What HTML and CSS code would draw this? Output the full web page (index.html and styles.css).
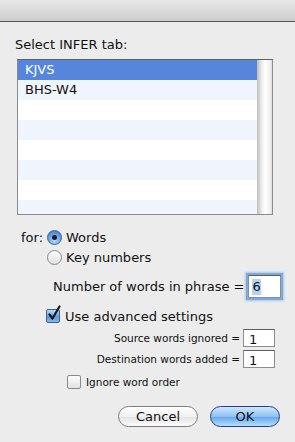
FILE: index.html
```html
<!DOCTYPE html>
<html lang="en">
<head>
  <meta charset="UTF-8" />
  <title>Select INFER tab</title>
  <link rel="stylesheet" href="styles.css">
</head>
<body>
  <div class="titlebar"></div>

  <div class="dialog">
    <div class="caption">Select INFER tab:</div>

    <div class="list">
      <div class="rows">
        <div class="row selected">KJVS</div>
        <div class="row">BHS-W4</div>
        <div class="row"></div>
        <div class="row"></div>
        <div class="row"></div>
        <div class="row"></div>
        <div class="row"></div>
        <div class="row"></div>
      </div>
      <div class="scrollbar"></div>
    </div>

    <div class="for-group">
      <span class="for-label">for:</span>
      <div class="radios">
        <label class="radio-item"><span class="radio checked"></span>Words</label>
        <label class="radio-item"><span class="radio"></span>Key numbers</label>
      </div>
    </div>

    <div class="phrase-row">
      <span>Number of words in phrase =</span>
      <span class="field focused"><span class="sel">6</span></span>
    </div>

    <label class="check-item">
      <span class="checkbox">
        <svg width="17" height="19" viewBox="0 0 17 19">
          <path d="M3.5 10.5 L6.5 14.5 L13.5 2.5" fill="none" stroke="#1a1a1a" stroke-width="2.2" stroke-linecap="round" stroke-linejoin="round"/>
        </svg>
      </span>
      Use advanced settings
    </label>

    <div class="small-row first">
      <span>Source words ignored =</span>
      <span class="field small">1</span>
    </div>
    <div class="small-row">
      <span>Destination words added =</span>
      <span class="field small">1</span>
    </div>

    <label class="small-check">
      <span class="box"></span>Ignore word order
    </label>

    <div class="buttons">
      <button class="btn cancel">Cancel</button>
      <button class="btn ok">OK</button>
    </div>
  </div>
</body>
</html>
```

FILE: styles.css
```css
* {
  margin: 0;
  padding: 0;
  box-sizing: border-box;
}

body {
  font-family: 'DejaVu Sans', sans-serif;
  font-size: 13px;
  color: #111;
  background: #ececec;
  width: 295px;
  height: 442px;
  overflow: hidden;
}

.titlebar {
  height: 22px;
  background: linear-gradient(#e9e9e9, #cdcdcd);
  border-bottom: 1px solid #575757;
}

.dialog {
  padding: 0 0 0 17px;
}

.caption {
  margin: 15px 0 0 -2px;
  line-height: 16px;
}

.list {
  margin-top: 6px;
  width: 256px;
  height: 156px;
  border: 1px solid #8c8c8c;
  border-top-color: #606060;
  display: flex;
  background: #fff;
}

.rows {
  flex: 1;
  overflow: hidden;
}

.row {
  height: 20px;
  line-height: 20px;
  padding-left: 7px;
}

.row:nth-child(even) {
  background: #eff4fd;
}

.row.selected {
  background: #5586dc;
  color: #fff;
}

.scrollbar {
  width: 15px;
  background: linear-gradient(to right, #bdbdbd, #ececec 30%, #fff 55%, #f0f0f0 85%, #dedede);
}

.for-group {
  display: flex;
  margin-top: 15px;
  margin-left: 4px;
}

.for-label {
  line-height: 16px;
  margin-right: 4px;
}

.radios {
  display: flex;
  flex-direction: column;
  gap: 5px;
}

.radio-item {
  display: flex;
  align-items: center;
  height: 15px;
}

.radio {
  width: 15px;
  height: 15px;
  border-radius: 50%;
  border: 1px solid #8a8a8a;
  background: linear-gradient(#fdfdfd, #e0e0e0);
  margin-right: 4px;
  position: relative;
}

.radio.checked {
  border-color: #3d5f94;
  background: radial-gradient(circle at 50% 75%, #b7dcf9, #5d9ae0 60%, #3b73c4);
}

.radio.checked::after {
  content: "";
  position: absolute;
  left: 4px;
  top: 4px;
  width: 5px;
  height: 5px;
  border-radius: 50%;
  background: #1c1c2c;
}

.phrase-row {
  display: flex;
  align-items: center;
  margin: 10px 0 0 36px;
}

.field {
  display: inline-flex;
  align-items: center;
  background: #fff;
  border: 1px solid #8d8d8d;
  border-top-color: #5e5e5e;
}

.field.focused {
  width: 33px;
  height: 23px;
  margin-left: 4px;
  padding-left: 3px;
  box-shadow: 0 0 0 2px #7ea9dd, 0 0 2px 3px #a9c6ea;
}

.sel {
  background: #b5d3f7;
  line-height: 16px;
}

.check-item {
  display: flex;
  align-items: center;
  margin: 10px 0 0 29px;
  height: 16px;
}

.checkbox {
  width: 14px;
  height: 14px;
  border: 1px solid #3d5f94;
  border-radius: 2px;
  background: linear-gradient(#b9dbf8, #5f9ae0 60%, #80b8ee);
  margin-right: 5px;
  position: relative;
}

.checkbox svg {
  position: absolute;
  left: -1px;
  top: -6px;
}

.small-row {
  display: flex;
  justify-content: flex-end;
  align-items: center;
  padding-right: 20px;
  font-size: 10.5px;
  margin-top: 3px;
}

.small-row.first {
  margin-top: 5px;
}

.field.small {
  width: 32px;
  height: 18px;
  margin-left: 3px;
  padding: 2px 0 0 5px;
  font-size: 13px;
}

.small-check {
  display: flex;
  align-items: center;
  font-size: 10.5px;
  margin: 7px 0 0 50px;
}

.box {
  width: 14px;
  height: 14px;
  border: 1px solid #8a8a8a;
  border-radius: 2px;
  background: linear-gradient(#fdfdfd, #e2e2e2);
  margin-right: 5px;
}

.buttons {
  display: flex;
  justify-content: flex-end;
  gap: 12px;
  padding-right: 15px;
  margin-top: 17px;
}

.btn {
  font-family: 'DejaVu Sans', sans-serif;
  font-size: 13px;
  height: 21px;
  border-radius: 11px;
  color: #111;
}

.cancel {
  width: 80px;
  border: 1px solid #7d7d7d;
  background: linear-gradient(#ffffff, #f1f1f1 50%, #e3e3e3 51%, #fbfbfb);
}

.ok {
  width: 70px;
  border: 1px solid #2a3c8c;
  background: linear-gradient(#cde6fb, #8fc2f2 50%, #62a6ec 51%, #b5e0fb);
}
```
